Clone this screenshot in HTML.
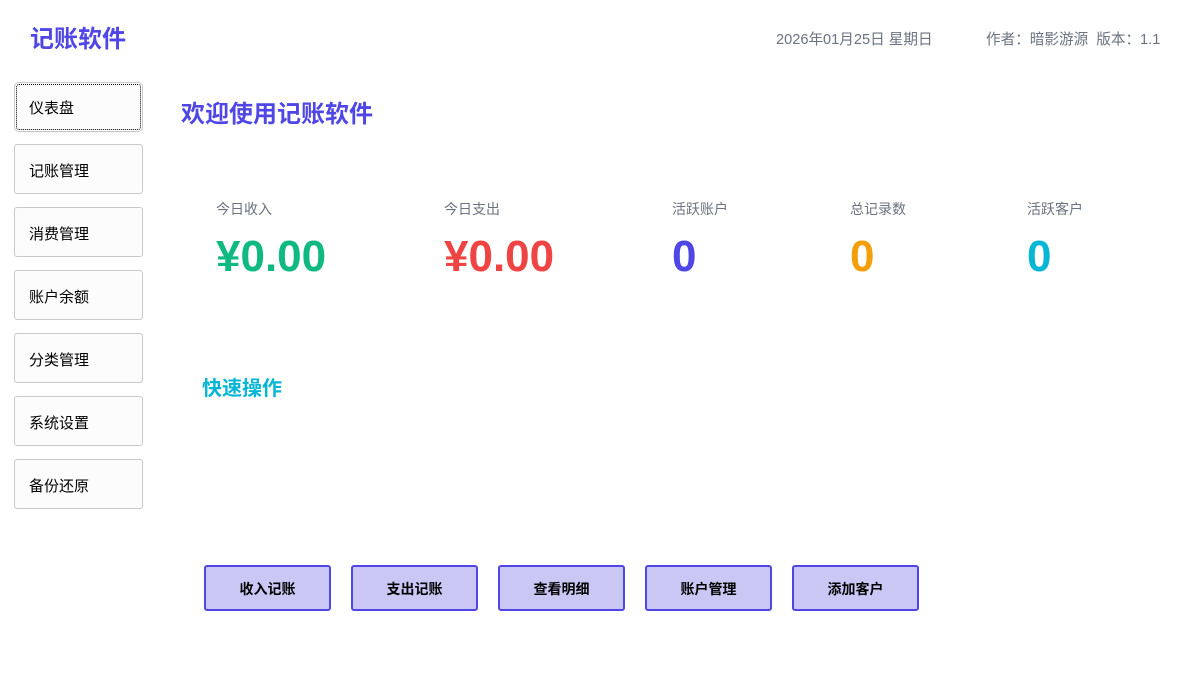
<!DOCTYPE html>
<html><head><meta charset="utf-8"><style>
body{margin:0;width:1188px;height:678px;background:#fff;font-family:"Liberation Sans","Noto Sans CJK SC",sans-serif;position:relative;overflow:hidden}
.a{position:absolute;white-space:nowrap}
.title{left:30px;top:19px;font-size:24px;font-weight:bold;color:#4f46e5}
.hdr{top:28px;font-size:14.6px;color:#6b7280}
.nav{position:absolute;left:14px;border:1px solid #c9c9c9;border-radius:3px;background:#fcfcfc;font-size:15px;line-height:54px;height:50px;padding-left:14px;box-sizing:border-box;width:129px;overflow:hidden}
.lbl{font-size:14px;color:#6b7280;top:199px}
.val{font-size:44px;font-weight:bold;top:232px}
.btn{position:absolute;top:565px;width:127px;height:46px;box-sizing:border-box;border:2px solid #4f46e5;border-radius:3px;background:#cac7f5;font-size:14px;font-weight:bold;text-align:center;line-height:44px;color:#000}
</style></head><body>
<div class="a title">记账软件</div>
<div class="a hdr" style="left:776px">2026年01月25日 星期日</div>
<div class="a hdr" style="left:986px">作者：暗影游源&nbsp; 版本：1.1</div>
<div class="nav" style="border:1px dotted #000;outline:1px solid #c9c9c9;outline-offset:1px;top:84px;left:16px;width:125px;height:46px;line-height:48px;padding-left:12px">仪表盘</div>
<div class="nav" style="top:144px">记账管理</div>
<div class="nav" style="top:207px">消费管理</div>
<div class="nav" style="top:270px">账户余额</div>
<div class="nav" style="top:333px">分类管理</div>
<div class="nav" style="top:396px">系统设置</div>
<div class="nav" style="top:459px">备份还原</div>
<div class="a" style="left:181px;top:94px;font-size:24px;font-weight:bold;color:#4f46e5">欢迎使用记账软件</div>
<div class="a lbl" style="left:216px">今日收入</div>
<div class="a lbl" style="left:444px">今日支出</div>
<div class="a lbl" style="left:672px">活跃账户</div>
<div class="a lbl" style="left:850px">总记录数</div>
<div class="a lbl" style="left:1027px">活跃客户</div>
<div class="a val" style="left:216px;color:#10b981">¥0.00</div>
<div class="a val" style="left:444px;color:#ef4444">¥0.00</div>
<div class="a val" style="left:672px;color:#4f46e5">0</div>
<div class="a val" style="left:850px;color:#f59e0b">0</div>
<div class="a val" style="left:1027px;color:#06b6d4">0</div>
<div class="a" style="left:202px;top:372px;font-size:20px;font-weight:bold;color:#06b6d4">快速操作</div>
<div class="btn" style="left:204px">收入记账</div>
<div class="btn" style="left:351px">支出记账</div>
<div class="btn" style="left:498px">查看明细</div>
<div class="btn" style="left:645px">账户管理</div>
<div class="btn" style="left:792px">添加客户</div>
</body></html>
